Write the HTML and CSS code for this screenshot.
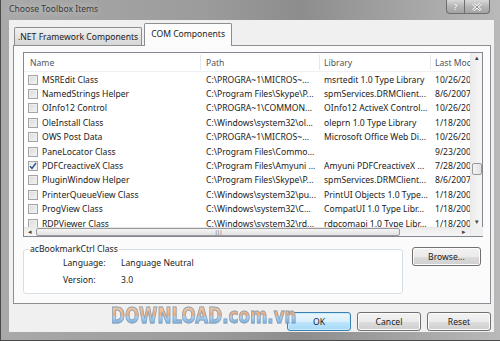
FILE: index.html
```html
<!DOCTYPE html>
<html lang="en">
<head>
    <meta charset="UTF-8">
    <title>Choose Toolbox Items</title>
    <link rel="stylesheet" href="styles.css">
</head>
<body>
    <div class="window">
        <div class="titlebar">
            <span class="title">Choose Toolbox Items</span>
            <div class="caption-buttons">
                <div class="cap-btn help">?</div>
                <div class="cap-btn close">
                    <svg width="10" height="8" viewBox="0 0 10 8"><path d="M1 0.5 L9 7.5 M9 0.5 L1 7.5" stroke="#fff" stroke-width="2.4"/><path d="M1 0.5 L9 7.5 M9 0.5 L1 7.5" stroke="#8a8a8a" stroke-width="1"/></svg>
                </div>
            </div>
        </div>

        <div class="client">
            <div class="tabs">
                <div class="tab">.NET Framework Components</div>
                <div class="tab active">COM Components</div>
            </div>

            <div class="tab-panel">
                <div class="listbox">
                    <div class="list-main">
                        <div class="list-header">
                            <div class="col col-name">Name</div>
                            <div class="col col-path">Path</div>
                            <div class="col col-lib">Library</div>
                            <div class="col col-date">Last Mod</div>
                        </div>
                        <div class="list-body">
                            <div class="row"><div class="col col-name"><span class="check"></span>MSREdit Class</div><div class="col col-path">C:\PROGRA~1\MICROS~...</div><div class="col col-lib">msrtedit 1.0 Type Library</div><div class="col col-date">10/26/2007</div></div>
                            <div class="row"><div class="col col-name"><span class="check"></span>NamedStrings Helper</div><div class="col col-path">C:\Program Files\Skype\P...</div><div class="col col-lib">spmServices.DRMClient...</div><div class="col col-date">8/6/2007</div></div>
                            <div class="row"><div class="col col-name"><span class="check"></span>OInfo12 Control</div><div class="col col-path">C:\PROGRA~1\COMMON...</div><div class="col col-lib">OInfo12 ActiveX Control...</div><div class="col col-date">10/26/2007</div></div>
                            <div class="row"><div class="col col-name"><span class="check"></span>OleInstall Class</div><div class="col col-path">C:\Windows\system32\ol...</div><div class="col col-lib">oleprn 1.0 Type Library</div><div class="col col-date">1/18/2008</div></div>
                            <div class="row"><div class="col col-name"><span class="check"></span>OWS Post Data</div><div class="col col-path">C:\PROGRA~1\MICROS~...</div><div class="col col-lib">Microsoft Office Web Di...</div><div class="col col-date">10/26/2007</div></div>
                            <div class="row"><div class="col col-name"><span class="check"></span>PaneLocator Class</div><div class="col col-path">C:\Program Files\Commo...</div><div class="col col-lib"></div><div class="col col-date">9/23/2006</div></div>
                            <div class="row"><div class="col col-name"><span class="check checked"><svg width="8" height="8" viewBox="0 0 8 8"><path d="M1 4.2 L3 6.5 L7 1" fill="none" stroke="#2c4f8c" stroke-width="1.4"/></svg></span>PDFCreactiveX Class</div><div class="col col-path">C:\Program Files\Amyuni ...</div><div class="col col-lib">Amyuni PDFCreactiveX ...</div><div class="col col-date">7/28/2006</div></div>
                            <div class="row"><div class="col col-name"><span class="check"></span>PluginWindow Helper</div><div class="col col-path">C:\Program Files\Skype\P...</div><div class="col col-lib">spmServices.DRMClient...</div><div class="col col-date">8/6/2007</div></div>
                            <div class="row"><div class="col col-name"><span class="check"></span>PrinterQueueView Class</div><div class="col col-path">C:\Windows\system32\pu...</div><div class="col col-lib">PrintUI Objects 1.0 Type...</div><div class="col col-date">1/18/2008</div></div>
                            <div class="row"><div class="col col-name"><span class="check"></span>ProgView Class</div><div class="col col-path">C:\Windows\system32\C...</div><div class="col col-lib">CompatUI 1.0 Type Libr...</div><div class="col col-date">1/18/2008</div></div>
                            <div class="row"><div class="col col-name"><span class="check"></span>RDPViewer Class</div><div class="col col-path">C:\Windows\system32\rd...</div><div class="col col-lib">rdpcomapi 1.0 Type Libr...</div><div class="col col-date">1/18/2008</div></div>
                        </div>
                        <div class="hscroll">
                            <span class="arrow">&#9666;</span>
                            <div class="hthumb"><span class="grip">|||</span></div>
                            <span class="arrow">&#9656;</span>
                        </div>
                    </div>
                    <div class="vscroll">
                        <span class="arrow">&#9652;</span>
                        <div class="vtrack"><div class="vthumb"></div></div>
                        <span class="arrow">&#9662;</span>
                        <div class="corner"></div>
                    </div>
                </div>

                <div class="details">
                    <fieldset class="groupbox">
                        <legend>acBookmarkCtrl Class</legend>
                        <div class="prop"><span class="prop-label">Language:</span><span>Language Neutral</span></div>
                        <div class="prop"><span class="prop-label">Version:</span><span>3.0</span></div>
                    </fieldset>
                    <button class="btn browse">Browse...</button>
                </div>
            </div>

            <div class="footer">
                <button class="btn default">OK</button>
                <button class="btn">Cancel</button>
                <button class="btn">Reset</button>
            </div>
        </div>

        <div class="watermark">DOWNLOAD.com.vn</div>
    </div>
</body>
</html>
```

FILE: styles.css
```css
* {
    box-sizing: border-box;
    margin: 0;
    padding: 0;
}

body {
    font-family: "Noto Sans", "Open Sans", sans-serif;
    font-size: 8.6px;
    color: #1a1a1a;
    background-color: #6b6b6b;
}

.window {
    position: relative;
    width: 500px;
    height: 341px;
    padding: 0 6px 8px 8px;
    display: flex;
    flex-direction: column;
    background: linear-gradient(90deg, #a9a9a9 0%, #9c9c9c 40%, #8d8d8d 60%, #b9b9b9 100%);
    border-left: 1px solid #4a4a4a;
    border-bottom: 1px solid #4a4a4a;
    overflow: hidden;
}

.titlebar {
    height: 20px;
    display: flex;
    justify-content: space-between;
    align-items: flex-start;
    margin-left: -7px;
}

.title {
    padding: 3px 0 0 7px;
    color: #3a3a3a;
    text-shadow: 0 0 6px #d8d8d8;
}

.caption-buttons {
    display: flex;
    margin-right: 4px;
}

.cap-btn {
    height: 14px;
    display: flex;
    align-items: center;
    justify-content: center;
    border: 1px solid #6e6e6e;
    border-top: none;
    background: linear-gradient(#d8d8d8, #b4b4b4 50%, #a4a4a4);
    color: #f4f4f4;
    font-size: 9px;
    font-weight: bold;
}

.cap-btn.help {
    width: 19px;
    border-radius: 0 0 0 4px;
    text-shadow: 0 0 1px #777;
}

.cap-btn.close {
    width: 25px;
    border-left: none;
    border-radius: 0 0 4px 0;
}

.client {
    flex: 1;
    background-color: #f0f0f0;
    padding: 3px 3px 0 4px;
    display: flex;
    flex-direction: column;
}

.tabs {
    display: flex;
    align-items: flex-end;
    height: 22px;
    padding-left: 1px;
    position: relative;
    z-index: 1;
}

.tab {
    height: 18px;
    padding: 3px 3px 0 3px;
    border: 1px solid #8c8e94;
    border-bottom: none;
    background: linear-gradient(#f2f2f2, #e3e3e3 50%, #d6d6d6);
    border-radius: 2px 2px 0 0;
    white-space: nowrap;
}

.tab.active {
    height: 23px;
    margin-left: 2px;
    padding: 4px 6px 0 6px;
    background: #fcfcfc;
    margin-bottom: -1px;
}

.tab-panel {
    height: 259px;
    border: 1px solid #8c8e94;
    background-color: #fbfbfb;
    padding: 6px 9px 0 9px;
}

.listbox {
    height: 185px;
    width: 460px;
    border: 1px solid #828790;
    background-color: #fff;
    display: flex;
}

.list-main {
    flex: 1;
    display: flex;
    flex-direction: column;
    overflow: hidden;
}

.list-header {
    height: 19px;
    display: flex;
    align-items: center;
    color: #4d5562;
    border-bottom: 1px solid #eef0f3;
    flex-shrink: 0;
}

.list-header .col {
    border-right: 1px solid #e6e8ec;
    padding-top: 1px;
}

.list-body {
    flex: 1;
    overflow: hidden;
    padding-top: 0.5px;
}

.row {
    height: 14.4px;
    display: flex;
    align-items: center;
}

.col {
    white-space: nowrap;
    overflow: hidden;
    flex-shrink: 0;
    padding-left: 4px;
    line-height: 14px;
}

.col-name {
    width: 177px;
    display: flex;
    align-items: center;
}

.list-header .col-name {
    padding-left: 6px;
}

.col-path {
    width: 119px;
    padding-left: 5px;
}

.col-lib {
    width: 111px;
}

.col-date {
    width: 60px;
}

.check {
    width: 10px;
    height: 10px;
    margin: 0 4px 0 0;
    border: 1px solid #a4a4a4;
    background: linear-gradient(135deg, #d9d9d9, #f5f5f5);
    box-shadow: inset 0 0 0 1px #eeeeee;
    display: flex;
    align-items: center;
    justify-content: center;
}

.check.checked {
    background: linear-gradient(135deg, #e4e4e4, #fbfbfb);
}

.hscroll {
    height: 9px;
    flex-shrink: 0;
    display: flex;
    align-items: center;
    background: linear-gradient(#ececec, #f6f6f6);
    border-top: 1px solid #e6e6e6;
}

.arrow {
    font-size: 7px;
    color: #404040;
    width: 12px;
    text-align: center;
    line-height: 8px;
}

.hthumb {
    width: 376px;
    height: 8px;
    margin-right: 58px;
    border: 1px solid #9a9a9a;
    border-radius: 2px;
    background: linear-gradient(#f4f4f4, #e2e2e2);
    display: flex;
    justify-content: center;
    align-items: center;
}

.grip {
    font-size: 6px;
    line-height: 6px;
    color: #555;
    letter-spacing: -1px;
}

.vscroll {
    width: 12px;
    display: flex;
    flex-direction: column;
    align-items: center;
    background: linear-gradient(90deg, #ececec, #f6f6f6);
    border-left: 1px solid #e8e8e8;
}

.vscroll .arrow {
    height: 10px;
    line-height: 10px;
}

.vtrack {
    flex: 1;
    width: 100%;
    position: relative;
}

.vthumb {
    position: absolute;
    top: 100px;
    left: 1px;
    width: 10px;
    height: 12px;
    border: 1px solid #9a9a9a;
    border-radius: 2px;
    background: linear-gradient(90deg, #f4f4f4, #e2e2e2);
}

.corner {
    width: 12px;
    height: 9px;
    background-color: #f0f0f0;
}

.details {
    display: flex;
    align-items: flex-start;
    margin-top: 6px;
}

.groupbox {
    width: 384px;
    height: 51px;
    border: 1px solid #d5dfe5;
    border-radius: 3px;
    background-color: #fff;
    padding: 0 0 0 39px;
}

.groupbox legend {
    margin-left: -34px;
    padding: 0 1px;
    line-height: 12px;
}

.prop {
    display: flex;
    line-height: 17px;
}

.prop-label {
    width: 58px;
}

.btn {
    font-family: "Noto Sans", "Open Sans", sans-serif;
    font-size: 8.6px;
    color: #1a1a1a;
    height: 19px;
    border: 1px solid #707070;
    border-radius: 3px;
    background: linear-gradient(#f2f2f2, #ebebeb 50%, #dddddd 51%, #cfcfcf);
    box-shadow: inset 0 0 0 1px #fcfcfc;
}

.browse {
    width: 70px;
    margin: 4px 0 0 9px;
}

.footer {
    display: flex;
    justify-content: flex-end;
    gap: 6px;
    padding: 8px 0 0 0;
}

.footer .btn {
    width: 64px;
}

.btn.default {
    border-color: #3c7fb1;
    background: linear-gradient(#eaf6fd, #d9f0fc 50%, #bee6fd 51%, #a7d9f5);
    box-shadow: inset 0 0 0 1px #c7ebfb;
}

.watermark {
    position: absolute;
    left: 110px;
    top: 305px;
    font-family: "DejaVu Sans", sans-serif;
    font-size: 22px;
    line-height: 22px;
    font-weight: bold;
    transform: scaleX(0.76);
    transform-origin: left top;
    background: linear-gradient(#f8d2aa 0%, #f0a36a 45%, #a8d0f0 55%, #4b90d4 100%);
    -webkit-background-clip: text;
    background-clip: text;
    color: transparent;
    -webkit-text-stroke: 1px #7f9cb8;
    opacity: 0.9;
}
```
